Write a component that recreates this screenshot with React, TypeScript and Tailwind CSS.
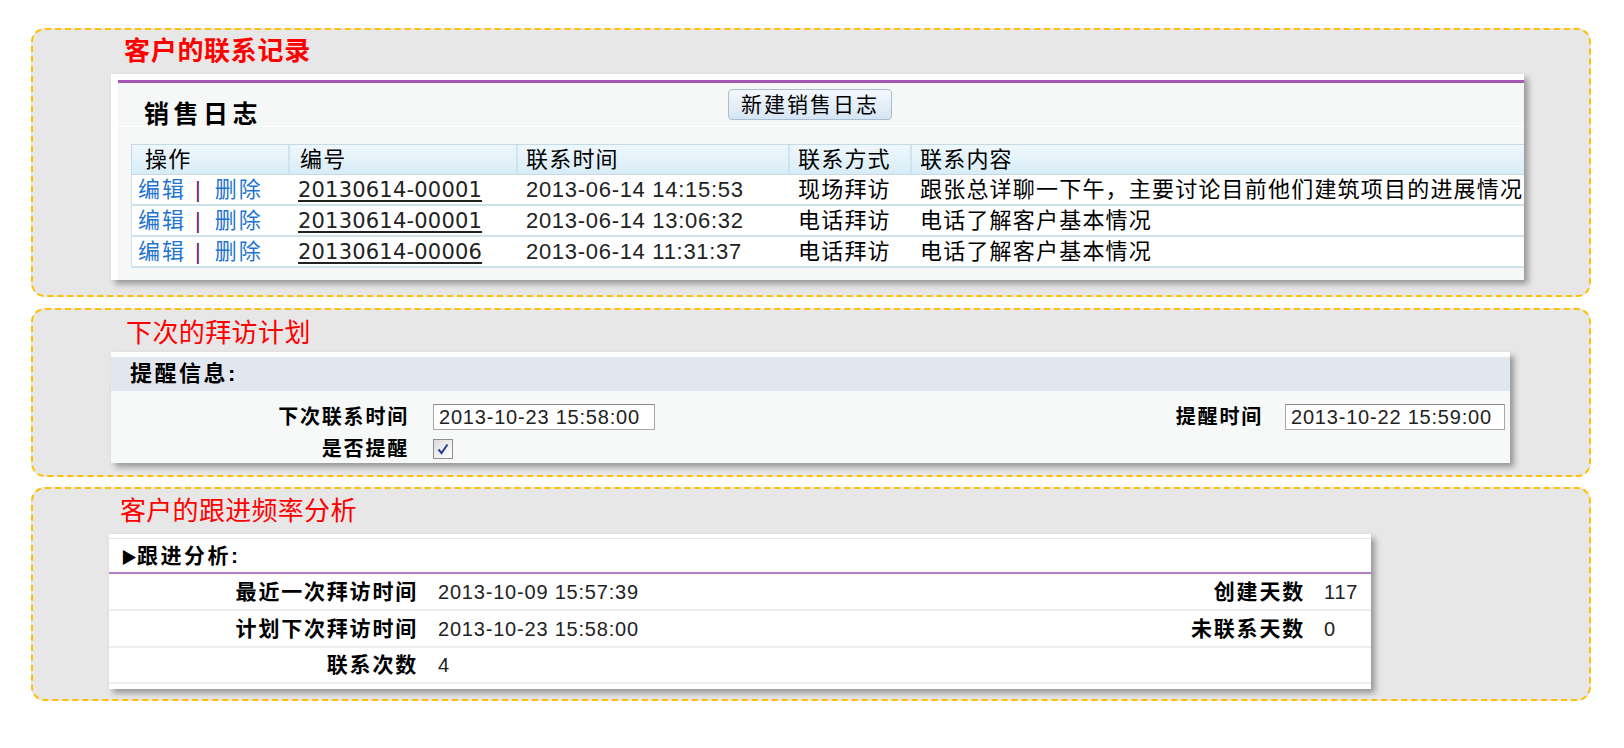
import React from "react";

const rows = [
  {
    no: "20130614-00001",
    time: "2013-06-14 14:15:53",
    way: "现场拜访",
    content: "跟张总详聊一下午，主要讨论目前他们建筑项目的进展情况",
  },
  {
    no: "20130614-00001",
    time: "2013-06-14 13:06:32",
    way: "电话拜访",
    content: "电话了解客户基本情况",
  },
  {
    no: "20130614-00006",
    time: "2013-06-14 11:31:37",
    way: "电话拜访",
    content: "电话了解客户基本情况",
  },
];

function Box({ className, children }: { className: string; children: React.ReactNode }) {
  return (
    <div
      className={
        "w-[1560px] rounded-[14px] border-2 border-dashed border-[#ffc000] bg-[#e7e7e7] " + className
      }
    >
      {children}
    </div>
  );
}

function SalesLog() {
  return (
    <div className="ml-[78px] mt-[8px] h-[206px] w-[1413px] bg-white pl-[7px] pt-[6px] shadow-[4px_4px_6px_rgba(0,0,0,0.35)]">
      <div className="h-full overflow-hidden border-t-[3px] border-[#a659b4] bg-[#f6f8f8]">
        <div className="flex h-[44px] border-b border-white">
          <div className="w-[610px] pl-[26px] pt-[16px] text-[25px] font-bold leading-[30px] tracking-[4.5px] text-black">
            销售日志
          </div>
          <button className="mt-[6px] h-[31px] w-[164px] rounded-[4px] border border-[#a9bdd2] bg-gradient-to-b from-[#f4f8fc] to-[#d6e5f3] text-[21px] leading-[29px] tracking-[2px] text-black">
            新建销售日志
          </button>
        </div>
        <div className="pl-[13px] pt-[17px]">
          <div className="w-[1520px] whitespace-nowrap text-[22px] text-black">
            <div className="grid h-[31px] grid-cols-[158px_228px_272px_122px_1fr] border border-[#c4dbe7] bg-gradient-to-b from-[#eff8fc] to-[#d8ecf6] leading-[29px] tracking-[1.2px]">
              <div className="border-r-2 border-[#cfe3ee] pl-[13px]">操作</div>
              <div className="border-r-2 border-[#cfe3ee] pl-[10px]">编号</div>
              <div className="border-r-2 border-[#cfe3ee] pl-[8px]">联系时间</div>
              <div className="border-r-2 border-[#cfe3ee] pl-[8px]">联系方式</div>
              <div className="pl-[8px]">联系内容</div>
            </div>
            {rows.map((r, i) => (
              <div
                key={i}
                className="grid h-[31px] grid-cols-[158px_228px_272px_122px_1fr] border-b-2 border-l border-[#cfe2ec] bg-white leading-[29px]"
              >
                <div className="pl-[6px] tracking-[2px]">
                  <span className="text-[#1f74d1]">编辑</span>
                  <span className="ml-[9px] mr-[12px] text-[#6b2477]">|</span>
                  <span className="text-[#1f74d1]">删除</span>
                </div>
                <div className="pl-[8px]">
                  <span className="font-['DejaVu_Sans',sans-serif] text-[21px] tracking-[0.2px] text-[#222] underline underline-offset-[3px]">
                    {r.no}
                  </span>
                </div>
                <div className="pl-[8px] font-['Liberation_Sans',sans-serif] text-[22px] tracking-[0.7px] text-[#222]">
                  {r.time}
                </div>
                <div className="pl-[8px] tracking-[1.2px]">{r.way}</div>
                <div className="pl-[8px] tracking-[1.2px]">{r.content}</div>
              </div>
            ))}
          </div>
        </div>
      </div>
    </div>
  );
}

function CheckBox() {
  return (
    <div className="flex h-[20px] w-[20px] items-center justify-center border border-[#8e8e8e] bg-gradient-to-br from-[#dcdcdc] to-[#ffffff]">
      <svg width="14" height="14" viewBox="0 0 14 14">
        <path d="M2.5 7.5 L5.5 11 L11.5 2.5" fill="none" stroke="#2b3f98" strokeWidth="2" />
      </svg>
    </div>
  );
}

function Reminder() {
  const input =
    "h-[26px] whitespace-nowrap border border-[#a7a7a7] border-t-[#8a8a8a] bg-white pl-[5px] font-['Liberation_Sans',sans-serif] text-[20px] font-normal leading-[24px] tracking-[0.8px] text-[#222]";
  return (
    <div className="ml-[78px] mt-[4px] h-[111px] w-[1399px] bg-white pt-[5px] shadow-[4px_4px_6px_rgba(0,0,0,0.35)]">
      <div className="h-[34px] bg-[#e2e6ef] pl-[19px] text-[22px] font-bold leading-[34px] tracking-[2.5px] text-black">
        提醒信息:
      </div>
      <div className="h-[72px] bg-[#f7f9f9] pt-[13px] text-[20px] font-bold tracking-[1.8px] text-black">
        <div className="flex h-[26px] items-center pr-[5px]">
          <div className="w-[298px] text-right">下次联系时间</div>
          <div className={"ml-[24px] w-[222px] " + input}>2013-10-23 15:58:00</div>
          <div className="ml-auto text-right">提醒时间</div>
          <div className={"ml-[22px] w-[220px] " + input}>2013-10-22 15:59:00</div>
        </div>
        <div className="mt-[9px] flex h-[20px] items-center">
          <div className="w-[298px] text-right">是否提醒</div>
          <div className="ml-[24px]">
            <CheckBox />
          </div>
        </div>
      </div>
    </div>
  );
}

function Analysis() {
  const label = "text-right text-[21px] font-bold tracking-[1.8px] text-black";
  const value = "font-['Liberation_Sans',sans-serif] text-[20px] tracking-[0.8px] text-[#222]";
  return (
    <div className="ml-[76px] mt-[8px] h-[155px] w-[1262px] bg-white pt-[4px] shadow-[4px_4px_6px_rgba(0,0,0,0.35)]">
      <div className="h-[36px] border-b-2 border-t border-b-[#b47ec3] border-t-[#e6e6e6] pl-[12px] text-[21px] font-bold leading-[33px] tracking-[2.5px] text-black">
        <span className="text-[16px] tracking-normal">▶</span>跟进分析:
      </div>
      <div className="flex h-[37px] items-center border-b-2 border-[#ededed]">
        <div className={"w-[309px] " + label}>最近一次拜访时间</div>
        <div className={"ml-[20px] flex-1 " + value}>2013-10-09 15:57:39</div>
        <div className={label}>创建天数</div>
        <div className={"ml-[19px] w-[47px] " + value}>117</div>
      </div>
      <div className="flex h-[37px] items-center border-b-2 border-[#ededed]">
        <div className={"w-[309px] " + label}>计划下次拜访时间</div>
        <div className={"ml-[20px] flex-1 " + value}>2013-10-23 15:58:00</div>
        <div className={label}>未联系天数</div>
        <div className={"ml-[19px] w-[47px] " + value}>0</div>
      </div>
      <div className="flex h-[36px] items-center border-b-2 border-[#ededed]">
        <div className={"w-[309px] " + label}>联系次数</div>
        <div className={"ml-[20px] flex-1 " + value}>4</div>
      </div>
    </div>
  );
}

export default function App() {
  return (
    <div className="h-[748px] w-[1624px] overflow-hidden bg-white pl-[31px] pt-[28px] font-['Liberation_Sans','Noto_Sans_CJK_SC',sans-serif]">
      <Box className="h-[269px] pt-[6px]">
        <div className="ml-[91px] text-[26px] font-bold leading-[30px] tracking-[0.7px] text-[#ff0000]">
          客户的联系记录
        </div>
        <SalesLog />
      </Box>
      <Box className="mt-[11px] h-[169px] pt-[8px]">
        <div className="ml-[93px] text-[26px] leading-[30px] tracking-[0.4px] text-[#ff0000]">
          下次的拜访计划
        </div>
        <Reminder />
      </Box>
      <Box className="mt-[10px] h-[214px] pt-[7px]">
        <div className="ml-[87px] text-[26px] leading-[30px] tracking-[0.3px] text-[#ff0000]">
          客户的跟进频率分析
        </div>
        <Analysis />
      </Box>
    </div>
  );
}
